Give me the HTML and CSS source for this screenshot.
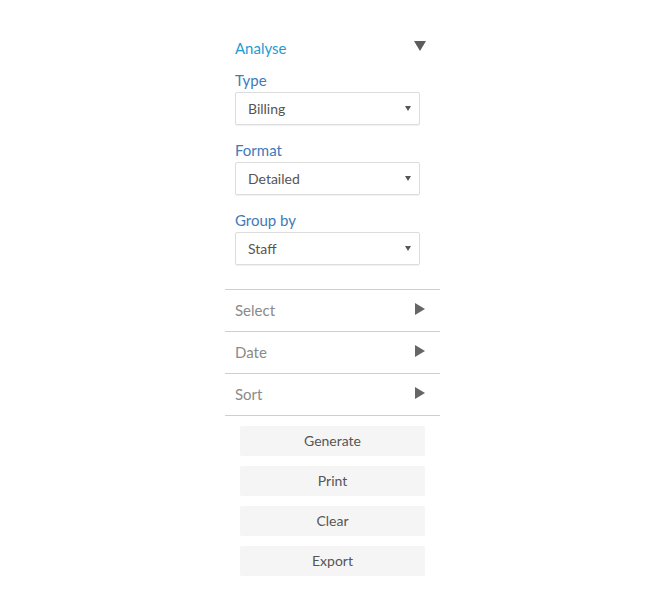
FILE: index.html
```html
<!DOCTYPE html>
<html>
<head>
<meta charset="utf-8">
<link rel="stylesheet" href="styles.css">
</head>
<body>
<div class="panel">
  <div class="section open">
    <div class="section-head">
      <span class="title">Analyse</span>
      <span class="tri down"></span>
    </div>
    <div class="field">
      <div class="label">Type</div>
      <div class="select"><span>Billing</span><span class="caret"></span></div>
    </div>
    <div class="field">
      <div class="label">Format</div>
      <div class="select"><span>Detailed</span><span class="caret"></span></div>
    </div>
    <div class="field">
      <div class="label">Group by</div>
      <div class="select"><span>Staff</span><span class="caret"></span></div>
    </div>
  </div>
  <div class="row"><span>Select</span><span class="tri right"></span></div>
  <div class="row"><span>Date</span><span class="tri right"></span></div>
  <div class="row"><span>Sort</span><span class="tri right"></span></div>
  <div class="buttons">
    <button class="btn">Generate</button>
    <button class="btn">Print</button>
    <button class="btn">Clear</button>
    <button class="btn">Export</button>
  </div>
</div>
</body>
</html>
```
FILE: styles.css
```css
html, body {
  margin: 0;
  padding: 0;
  background: #fff;
  font-family: Lato, "Liberation Sans", sans-serif;
}
.panel {
  width: 215px;
  margin-left: 225px;
  padding-top: 38px;
}
.section {
  padding: 0 20px 24px 10px;
  border-bottom: 1px solid #cfcfcf;
}
.section-head {
  display: flex;
  justify-content: space-between;
  align-items: flex-start;
  height: 20px;
  line-height: 20px;
  margin-bottom: 12px;
}
.title {
  font-size: 15px;
  color: #1f9bd3;
}
.tri {
  display: block;
  width: 0;
  height: 0;
}
.tri.down {
  margin-top: 3px;
  margin-right: -6px;
  border-left: 6px solid transparent;
  border-right: 6px solid transparent;
  border-top: 10px solid #5c5c5c;
}
.tri.right {
  margin-top: 3px;
  border-top: 6px solid transparent;
  border-bottom: 6px solid transparent;
  border-left: 10px solid #666;
}
.field {
  margin-bottom: 15px;
}
.field:last-child {
  margin-bottom: 0;
}
.label {
  font-size: 15px;
  line-height: 20px;
  color: #417ab8;
  margin-bottom: 2px;
}
.select {
  box-sizing: border-box;
  width: 185px;
  height: 33px;
  border: 1px solid #dcdcdc;
  border-radius: 2px;
  box-shadow: 0 1px 1px rgba(0,0,0,0.06);
  display: flex;
  align-items: center;
  justify-content: space-between;
  padding: 0 8px 0 12px;
  font-size: 14px;
  color: #555;
}
.caret {
  width: 0;
  height: 0;
  border-left: 3px solid transparent;
  border-right: 3px solid transparent;
  border-top: 5px solid #555;
}
.row {
  box-sizing: border-box;
  height: 42px;
  padding: 10px 15px 0 10px;
  border-bottom: 1px solid #cfcfcf;
  display: flex;
  justify-content: space-between;
  align-items: flex-start;
  font-size: 15px;
  line-height: 20px;
  color: #8a8a8a;
}
.buttons {
  display: flex;
  flex-direction: column;
  gap: 10px;
  padding: 10px 15px 0 15px;
}
.btn {
  height: 30px;
  border: none;
  border-radius: 2px;
  background: #f5f5f5;
  font-family: Lato, "Liberation Sans", sans-serif;
  font-size: 14px;
  color: #555;
  padding: 0 0 1px 0;
}
```
